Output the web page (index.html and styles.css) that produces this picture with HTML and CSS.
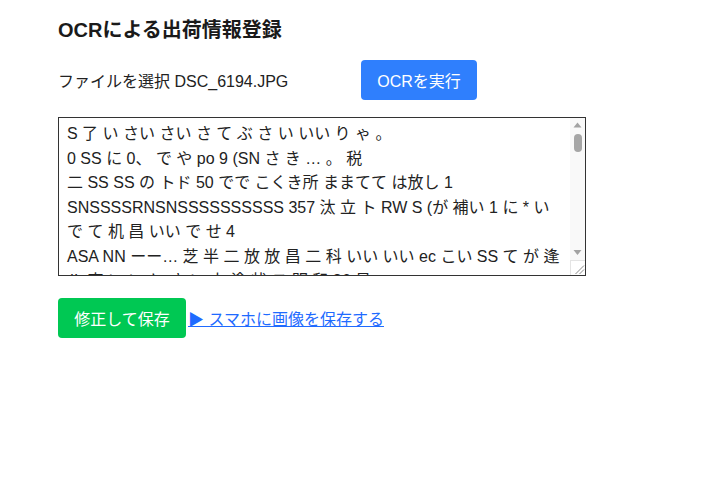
FILE: index.html
```html
<!DOCTYPE html>
<html lang="ja">
<head>
<meta charset="utf-8">
<title>OCRによる出荷情報登録</title>
<link rel="stylesheet" href="styles.css">
</head>
<body>
<main class="page">
  <h1 class="title">OCRによる出荷情報登録</h1>
  <div class="file-row">
    <span class="file-input"><span class="file-btn">ファイルを選択</span> <span class="file-name">DSC_6194.JPG</span></span>
    <button class="btn btn-blue" type="button">OCRを実行</button>
  </div>
  <div class="text-box">
    <textarea class="ocr-text" spellcheck="false">S 了 い さい さい さ て ぶ さ い いい り ゃ 。
0 SS に 0、 で や po 9 (SN さ き … 。 税
二 SS SS の トド 50 でで こくき所 ままてて は放し 1
SNSSSSRNSNSSSSSSSSSS 357 汰 立 ト RW S (が 補い 1 に * い で て 机 昌 いい で せ 4
ASA NN ーー… 芝 半 二 放 放 昌 二 科 いい いい ec こい SS て が 逢
ル 東 い い と さ い 上 塗 状 ヌ 明 和 36 号
に ま い で さ い い ま て
SS 52 二 で で い い</textarea>
    <div class="scrollbar" aria-hidden="true">
      <div class="sb-btn">
        <svg width="15" height="15" viewBox="0 0 15 15"><polygon points="3.5,9.5 11.5,9.5 7.5,4.5" fill="#a3a3a3"/></svg>
      </div>
      <div class="sb-track"><div class="sb-thumb"></div></div>
      <div class="sb-btn">
        <svg width="15" height="15" viewBox="0 0 15 15"><polygon points="3.5,5 11.5,5 7.5,10" fill="#a3a3a3"/></svg>
      </div>
      <div class="sb-corner">
        <svg width="15" height="15" viewBox="0 0 15 15"><path d="M14 5.5 L5.5 14 M14 9.5 L9.5 14" stroke="#8a8a8a" stroke-width="1"/></svg>
      </div>
    </div>
  </div>
  <div class="actions">
    <button class="btn btn-green" type="button">修正して保存</button>
    <a class="save-link" href="#">▶ スマホに画像を保存する</a>
  </div>
</main>
</body>
</html>
```

FILE: styles.css
```css
html, body {
  margin: 0;
  padding: 0;
  background: #ffffff;
}

body {
  font-family: "Liberation Sans", Arial, "Noto Sans CJK JP", sans-serif;
  font-size: 16px;
  color: #222222;
}

.page {
  padding: 17px 58px;
  display: flex;
  flex-direction: column;
  align-items: flex-start;
}

.title {
  margin: 0;
  font-size: 20px;
  line-height: 26px;
  font-weight: bold;
  color: #1a1a1a;
}

.file-row {
  margin-top: 17px;
  display: flex;
  align-items: center;
}

.file-input {
  width: 303px;
  font-size: 16px;
  color: #222222;
  white-space: nowrap;
}

.btn {
  border: none;
  border-radius: 4px;
  color: #ffffff;
  font-family: "Liberation Sans", Arial, "Noto Sans CJK JP", sans-serif;
  font-size: 16px;
  height: 40px;
  padding: 0 16px;
  cursor: pointer;
}

.btn-blue {
  background: #2f7ffd;
  width: 116px;
}

.btn-green {
  background: #00c853;
  width: 128px;
}

.text-box {
  margin-top: 17px;
  box-sizing: border-box;
  width: 528px;
  height: 159px;
  border: 1px solid #333333;
  display: flex;
  background: #ffffff;
}

.ocr-text {
  flex: 1;
  min-width: 0;
  box-sizing: border-box;
  height: 100%;
  border: none;
  outline: none;
  margin: 0;
  padding: 4px 8px 0 8px;
  font-family: "Liberation Sans", Arial, "Noto Sans CJK JP", sans-serif;
  font-size: 16px;
  line-height: 24.5px;
  color: #222222;
  resize: none;
  overflow: hidden;
  background: #ffffff;
}

.scrollbar {
  width: 15px;
  flex: none;
  display: flex;
  flex-direction: column;
  background: #f9f9f9;
}

.sb-btn {
  height: 15px;
  flex: none;
  display: flex;
}

.sb-track {
  flex: 1;
  display: flex;
  flex-direction: column;
  align-items: center;
}

.sb-thumb {
  width: 8px;
  height: 18px;
  margin-top: 1px;
  border-radius: 4px;
  background: #a6a6a6;
}

.sb-corner {
  height: 15px;
  flex: none;
  display: flex;
  box-sizing: border-box;
  background: #ffffff;
  border-top: 1px solid #e4e4e4;
  border-left: 1px solid #e4e4e4;
}

.sb-corner svg {
  margin: -1px 0 0 -1px;
}

.actions {
  margin-top: 22px;
  display: flex;
  align-items: center;
  gap: 2px;
}

.save-link {
  color: #1f6bff;
  text-decoration: underline;
  font-size: 16px;
}
```
